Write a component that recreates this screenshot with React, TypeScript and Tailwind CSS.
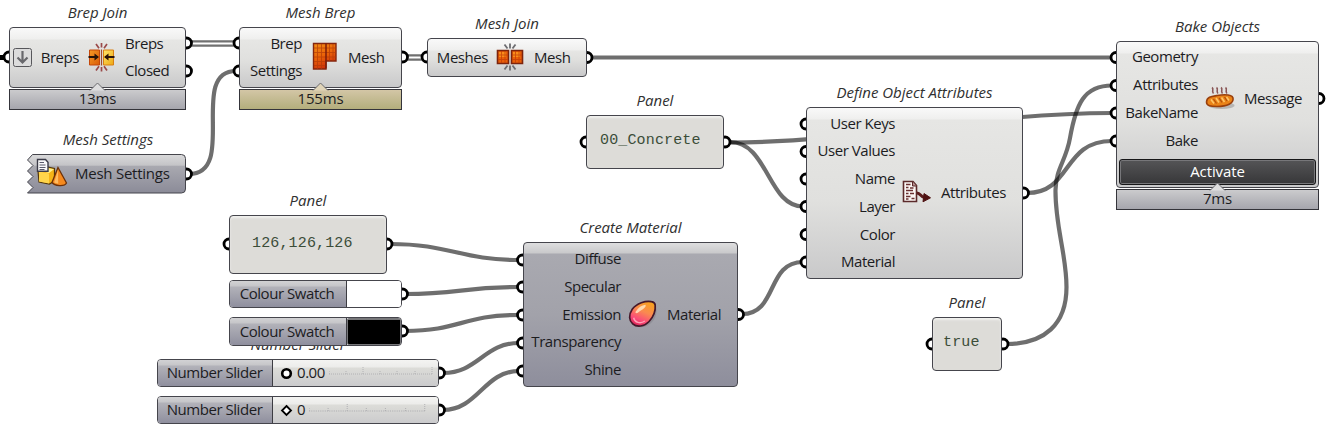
import type { ReactNode } from "react";

type Placed = { x: number; y: number; w: number; h: number };

const LIGHT = "bg-[linear-gradient(to_bottom,#f9f9f9_0,#efefee_11px,#e6e6e4_12px,#e0e0de_55%,#c9c9ca_100%)]";
const DARK = "bg-[linear-gradient(to_bottom,#dededf_0,#c9c9cb_10px,#a9a9b0_11px,#a2a2aa_50%,#8e8e9c_100%)]";
const TAG = "bg-[linear-gradient(to_bottom,#d2d2d4_0,#c6c6c9_5px,#b2b2b9_6px,#8f8f9e_100%)]";
const TRACK = "bg-[linear-gradient(to_bottom,#f4f4f2_0,#ececea_7px,#dcdcd8_8px,#cbcbcd_100%)]";

function Title({ children }: { children: ReactNode }) {
  return (
    <h2 className="mb-[5px] flex h-5 items-center justify-center text-[15px] tracking-[-0.02px] text-[#303030] italic">
      {children}
    </h2>
  );
}

function Timer({ text, warm }: { text: string; warm: boolean }) {
  return (
    <div
      className={`relative mt-px flex h-[21px] items-center justify-center border border-[#34343a] bg-linear-to-b pb-[3px] ${
        warm ? "from-[#d3c6a6] to-[#b3ae7c]" : "from-[#cbcbcd] to-[#a6a6ad]"
      }`}
    >
      <svg className="absolute -top-[8px] left-1/2 -ml-[9px]" width="18" height="9" viewBox="0 0 18 9">
        <path d="M1 8.500L8.500 1L16 8.500" fill={warm ? "#e0d4b8" : "#dededf"} stroke="#6a6a6e" strokeWidth="1" />
      </svg>
      <span className="relative tracking-[-0.2px]">{text}</span>
    </div>
  );
}

function Node({
  x,
  y,
  w,
  h,
  title,
  timer,
  warm = false,
  className = "",
  children,
}: Placed & { title?: string; timer?: string; warm?: boolean; className?: string; children: ReactNode }) {
  return (
    <section className="absolute flex flex-col" style={{ left: x, top: title ? y - 25 : y, width: w }}>
      {title && <Title>{title}</Title>}
      <div className={`overflow-hidden rounded-[4px] border border-[#45454c] ${className}`} style={{ height: h }}>
        {children}
      </div>
      {timer && <Timer text={timer} warm={warm} />}
    </section>
  );
}

function Names({ names, align, w }: { names: string[]; align: string; w?: number }) {
  return (
    <div className={`flex shrink-0 flex-col justify-center pb-[2px] ${align}`} style={{ width: w }}>
      {names.map((n) => (
        <span key={n} className="flex h-[27.7px] items-center">
          {n}
        </span>
      ))}
    </div>
  );
}

function Body({ inputs, w, icon, outputs }: { inputs: string[]; w: number; icon: ReactNode; outputs: string[] }) {
  return (
    <div className="flex h-full items-stretch">
      <Names names={inputs} w={w} align="items-end" />
      <div className="mr-[9px] ml-[7px] flex w-[30px] shrink-0 items-center justify-center pb-[2px]">{icon}</div>
      <Names names={outputs} align="items-start" />
    </div>
  );
}

function Panel({ pad, children, ...rect }: Placed & { children: ReactNode; pad: string }) {
  return (
    <Node {...rect} title="Panel" className="bg-[#dddcd8] shadow-[inset_0_2px_2px_#f0f0ee]">
      <div
        className={`flex h-full items-center font-['Liberation_Mono','Courier_New',monospace] text-[15px] tracking-[0.15px] whitespace-pre text-[#3b4d38] ${pad}`}
      >
        {children}
      </div>
    </Node>
  );
}

function JoinIcon() {
  return (
    <svg width="28" height="32" viewBox="0 0 28 32">
      <defs>
        <linearGradient id="jo" x1="0" y1="0" x2="1" y2="1">
          <stop offset="0" stopColor="#f79a25" />
          <stop offset="1" stopColor="#d95c08" />
        </linearGradient>
        <linearGradient id="jy" x1="0" y1="0" x2="1" y2="1">
          <stop offset="0" stopColor="#ffe66a" />
          <stop offset="1" stopColor="#eda713" />
        </linearGradient>
      </defs>
      <path d="M2.500 9h10v15h-10z" fill="url(#jo)" stroke="#c5480a" strokeWidth="1" />
      <path d="M16.500 9h10v15h-10z" fill="url(#jy)" stroke="#d87f12" strokeWidth="1" />
      <path d="M14.500 8.500v16" stroke="#a04a30" strokeWidth="1.200" />
      <path d="M1.500 16h7M27.500 16h-7" stroke="#2a1408" strokeWidth="1.800" />
      <path d="M7.500 12.500l4.500 3.500-4.500 3.500zM21.500 12.500L17 16l4.500 3.500z" fill="#2a1408" />
      <path d="M14.500 2v4.500M9 3l3 4.200M20 3l-3 4.200M14.500 26v4.500M9 29.500l3-4.200M20 29.500l-3-4.200" stroke="#9a4a4a" strokeWidth="1.700" fill="none" />
    </svg>
  );
}

function MeshIcon() {
  return (
    <svg width="26" height="30" viewBox="0 0 26 30">
      <defs>
        <linearGradient id="mb" x1="0" y1="0" x2="0.400" y2="1">
          <stop offset="0" stopColor="#f39016" />
          <stop offset="0.550" stopColor="#ea6208" />
          <stop offset="1" stopColor="#cf2f08" />
        </linearGradient>
      </defs>
      <path d="M2.500 1.500h22.500v17.500h-10v8h-12.500z" fill="url(#mb)" stroke="#84260e" strokeWidth="1.400" />
      <path d="M6.500 2v25M10.500 2v25M18.500 2v17M22 2v17M3 6h22M3 10.500h22M3 15h22M3 19.500h12M3 23.500h12" stroke="#b23a08" strokeWidth=".9" opacity=".75" />
      <path d="M15 1.500v25" stroke="#7c1c0a" strokeWidth="1.500" />
    </svg>
  );
}

function MeshJoinIcon() {
  return (
    <svg width="28" height="30" viewBox="0 0 28 30">
      <path d="M1.500 8.500h11v13h-11zM15.500 8.500h11v13h-11z" fill="#e95e08" stroke="#7c240c" strokeWidth="1.600" />
      <path d="M3 10h7v5H3zM17 10h7v5h-7z" fill="#fa8c1a" />
      <path d="M5.500 9v12M9 9v12M2 13h10M2 17.500h10M19.500 9v12M23 9v12M16 13h10M16 17.500h10" stroke="#c33c08" strokeWidth=".9" opacity=".8" />
      <path d="M14 1.500v5M8.500 2.500l3 4M19.500 2.500l-3 4M14 23.500v5M8.500 27.500l3-4M19.500 27.500l-3-4" stroke="#6c6c70" strokeWidth="1.800" />
    </svg>
  );
}

function GemIcon() {
  return (
    <svg width="32" height="32" viewBox="0 0 32 32">
      <defs>
        <linearGradient id="gm" x1="0.750" y1="0" x2="0.300" y2="1">
          <stop offset="0" stopColor="#f7a21c" />
          <stop offset="0.420" stopColor="#fa8a50" />
          <stop offset="0.750" stopColor="#fb4d78" />
          <stop offset="1" stopColor="#d82356" />
        </linearGradient>
      </defs>
      <path d="M6 27c5 5 15 4 21-4 4-6 4-12 2.500-18z" fill="#77777f" opacity=".4" />
      <path d="M25 2.800C19 1.500 9 4.500 4.500 11c-4 6-3.500 12 .5 15.500 4.500 4 12.500 3 17.500-2.500C28 18 29.500 12 29 6.500 28.900 4.200 27.500 3.200 25 2.800z" fill="url(#gm)" stroke="#45182a" strokeWidth="1.800" />
      <path d="M8.500 13c2.500-4 6-6.500 10-7 1.500 2-1.500 4-4.500 6-2.500 1.800-4 3.500-5.500 3-.8-.3-.6-1.200 0-2z" fill="#ffe5c2" opacity=".85" />
      <path d="M6 20c1 5 7 7 12 3.500" fill="none" stroke="#ff9fb5" strokeWidth="1.500" />
    </svg>
  );
}

function AttributesIcon() {
  return (
    <svg width="30" height="26" viewBox="0 0 30 26">
      <path d="M1.500 2.500h9.500l3.500 4v16H1.500z" fill="#fbf6f4" stroke="#5b2a2a" strokeWidth="1.600" />
      <path d="M10.500 2.500v4.500h4" fill="#b89090" stroke="#5b2a2a" strokeWidth="1" />
      <path d="M4 5.500h4.500M4 8.500h2.500M8 9h3.500M4 11.500h7M4 14.500h2.500M8 14.500h4M4 17.500h4.500M4 20h2.500M9.500 19.500h3" stroke="#6b3030" strokeWidth="1.500" />
      <path d="M15 14c3.500 0 3.500 4 7.500 4.500" fill="none" stroke="#5b1c1c" strokeWidth="3" />
      <path d="M22 14.500l6.500 4.300-7.500 4z" fill="#4f1212" stroke="#4f1212" strokeLinejoin="round" />
    </svg>
  );
}

function BreadIcon() {
  return (
    <svg className="shrink-0" width="32" height="26" viewBox="0 0 32 26">
      <path d="M8 2.500c2.500 1.800-1 3.500 1.500 6M12.500 2.500c2.500 1.800-1 3.500 1.500 6M17 2.500c2.500 1.800-1 3.500 1.500 6M21.500 2.500c2.500 1.800-1 3.500 1.500 6" fill="none" stroke="#8a5757" strokeWidth="1.600" />
      <ellipse cx="17.500" cy="20.500" rx="13" ry="3.500" fill="#8b8b8b" opacity=".5" />
      <path d="M2.500 17C3 12 7 11.500 13 10.500c7-1 15-1 16 2.500C30 18.500 23 21.500 13 21.500c-6 0-10.500-.3-10.500-4.500z" fill="#ea8318" stroke="#9a400c" strokeWidth="1.600" />
      <path d="M7 14.500l3 4M12 13l3 4.500M17.500 12.500l3 4.500M22.500 12l2.500 3.500" stroke="#ffc566" strokeWidth="1.600" />
      <path d="M9.500 14l3 4.500M15 12.800l3 4.500M20.500 12l2.500 4" stroke="#b4500c" strokeWidth="1.200" />
    </svg>
  );
}

function SettingsIcon() {
  return (
    <svg width="32" height="30" viewBox="0 0 32 30">
      <path d="M2 13l7-4.500 9.500 2V23l-5 3L3 24z" fill="#f6b417" stroke="#54380c" strokeWidth="1.200" />
      <path d="M3 13.500l10 2v10L3 23.500z" fill="#ffd54b" />
      <path d="M3 12.500l6-3 9 1.800-5 3.700z" fill="#fff08d" />
      <path d="M22 9.500L30.500 25c-2 4-12 3-14.500-.5z" fill="#f58a1f" stroke="#6d3108" strokeWidth="1.300" />
      <path d="M22 12l-3.800 12.500 4 1.300z" fill="#ffbc62" />
      <path d="M1.500 1.500h8l2.500 2.800v9H1.500z" fill="#fafafa" stroke="#3b3b48" strokeWidth="1.400" />
      <path d="M3.500 4.500h4.500M3.500 7h6M3.500 9.500h6M3.500 11.500h5" stroke="#5b5b6b" strokeWidth="1.200" />
    </svg>
  );
}

const wires = [
  "M592 57.500H1112",
  "M189 174C238 174 188 71 236 71",
  "M390 244C450 244 460 260 519 260",
  "M405 294C460 294 462 287 519 287",
  "M405 331C460 331 462 315 519 315",
  "M443 373C478 373 484 343 519 343",
  "M443 410C478 410 484 371 519 371",
  "M742 314C778 314 766 262 803 262",
  "M730 142C768 142 768 206.500 803 206.500",
  "M730 142.500C860 142.500 980 113 1112 113",
  "M1027 193C1072 193 1062 141 1112 141",
  "M1006 344C1045 344 1066.500 324 1066.500 287C1066.500 254 1055 226 1055.500 190C1056 168 1066 161 1070 138C1076 104 1084 85.500 1112 85.500",
];

const grips: [number, number][] = [
  [9, 57], [186.5, 43], [186.5, 71], [239, 43], [239, 71], [402.5, 57], [427, 57], [587, 57.5],
  [186.5, 174], [229, 244], [387, 244], [402.5, 294], [402.5, 331], [439.5, 373], [439.5, 410],
  [522.5, 260], [522.5, 287], [522.5, 315], [522.5, 343], [522.5, 371], [738.5, 314.5],
  [586, 142], [725, 142], [806, 124], [806, 151.5], [806, 179], [806, 206.5], [806, 234.5], [806, 262],
  [1023.5, 193], [1116, 57.5], [1116, 85.5], [1116, 113], [1116, 141], [1319, 98.5], [932, 344], [1003, 344],
];

function Wires() {
  return (
    <svg className="absolute inset-0" width="1327" height="430" viewBox="0 0 1327 430">
      {wires.map((d) => (
        <path key={d} d={d} fill="none" stroke="#000" strokeOpacity=".57" strokeWidth="4.200" />
      ))}
      <path d="M190 41.300H234M190 45.700H234M406 55.300H422M406 59.700H422" stroke="#707070" strokeWidth="2.300" />
      <path d="M0 57.500H5" stroke="#000" strokeWidth="5" />
      {grips.map(([x, y]) => (
        <circle key={`${x}-${y}`} cx={x} cy={y} r="5" fill="#fff" stroke="#000" strokeWidth="2.800" />
      ))}
    </svg>
  );
}

function Swatch({ y, h, black = false }: { y: number; h: number; black?: boolean }) {
  return (
    <Node x={229} y={y} w={173} h={h}>
      <div className="flex h-full">
        <div className={`flex w-[117px] shrink-0 items-center justify-center border-r border-[#3c3c42] pr-[2px] pb-[2px] ${TAG}`}>
          Colour Swatch
        </div>
        <div className={`flex-1 ${black ? "rounded-[2px] border border-t-2 border-[#77777a] bg-black" : "bg-white"}`} />
      </div>
    </Node>
  );
}

function Slider({ y, title, value, round }: { y: number; title?: string; value: string; round: boolean }) {
  return (
    <Node x={157} y={y} w={282} h={28} title={title}>
      <div className="flex h-full">
        <div className={`flex w-[115px] shrink-0 items-center justify-center border-r border-[#3c3c42] pr-px pb-[2px] ${TAG}`}>
          Number Slider
        </div>
        <div className={`flex flex-1 items-center pl-[7px] ${TRACK}`}>
          <svg width="13" height="13" viewBox="0 0 13 13">
            {round ? (
              <circle cx="6.500" cy="6.500" r="4.300" fill="#fff" stroke="#000" strokeWidth="2.600" />
            ) : (
              <path d="M6.500 2L11 6.500 6.500 11 2 6.500z" fill="#fff" stroke="#000" strokeWidth="1.800" />
            )}
          </svg>
          <span className="ml-[4px] pb-[2px]">{value}</span>
          <svg className="mr-3 ml-1 h-3 min-w-0 flex-1" viewBox="0 0 104 12" preserveAspectRatio="none">
            <path d="M0 7H104M0 7V4M17 7V4M34 7V0M51 7V4M68 7V4M86 7V4M103 7V0" stroke="#a8a8ac" strokeWidth=".8" strokeDasharray="1 1" fill="none" />
          </svg>
        </div>
      </div>
    </Node>
  );
}

function MeshSettings() {
  return (
    <section className="absolute top-[129px] left-[28px] flex w-[160px] flex-col">
      <Title>Mesh Settings</Title>
      <div className="relative -ml-px flex h-[40px] items-center">
        <svg className="absolute inset-0" width="160" height="40" viewBox="0 0 160 40">
          <defs>
            <linearGradient id="ms" x1="0" y1="0" x2="0" y2="1">
              <stop offset="0" stopColor="#dadadb" />
              <stop offset="0.280" stopColor="#c4c4c7" />
              <stop offset="0.300" stopColor="#a9a9b0" />
              <stop offset="1" stopColor="#8b8b98" />
            </linearGradient>
          </defs>
          <path d="M5.500.5H154.500Q158.500.5 158.500 4.500V35Q158.500 39 154.500 39H.500L6 33.500.500 28 6 22.500.500 17 6 11.500.500 6z" fill="url(#ms)" stroke="#45454c" />
        </svg>
        <div className="relative mb-[2px] ml-[9px] h-[30px] w-[32px]">
          <SettingsIcon />
        </div>
        <span className="relative ml-[7px] pb-[2px] tracking-[-0.25px]">Mesh Settings</span>
      </div>
    </section>
  );
}

export default function App() {
  return (
    <main className="relative h-[430px] w-[1327px] overflow-hidden bg-white font-['Open_Sans','Noto_Sans',sans-serif] text-[15px] leading-5 tracking-[-0.45px] whitespace-nowrap text-[#1c1c1f]">
      <Wires />

      <Node x={9} y={27} w={177} h={61} title="Brep Join" timer="13ms" className={LIGHT}>
        <div className="flex h-full items-stretch">
          <div className="flex w-[28px] shrink-0 items-center pb-px pl-[3px]">
            <svg width="19" height="19" viewBox="0 0 19 19">
              <rect x=".5" y=".5" width="18" height="18" rx="2" fill="#dcdcdc" stroke="#57575b" />
              <path d="M9.500 3v11M4.500 9.500l5 5 5-5" fill="none" stroke="#68686c" strokeWidth="2.200" />
            </svg>
          </div>
          <Body inputs={["Breps"]} w={41} icon={<JoinIcon />} outputs={["Breps", "Closed"]} />
        </div>
      </Node>

      <Node x={239} y={27} w={163} h={61} title="Mesh Brep" timer="155ms" warm className={LIGHT}>
        <Body inputs={["Brep", "Settings"]} w={62} icon={<MeshIcon />} outputs={["Mesh"]} />
      </Node>

      <Node x={427} y={38} w={160} h={39} title="Mesh Join" className={LIGHT}>
        <Body inputs={["Meshes"]} w={60} icon={<MeshJoinIcon />} outputs={["Mesh"]} />
      </Node>

      <MeshSettings />

      <Panel x={229} y={215} w={158} h={59} pad="pl-[22px] pb-[2px]">
        126,126,126
      </Panel>
      <Slider y={359} title="Number Slider" value="0.00" round />
      <Slider y={396} value="0" round={false} />
      <Swatch y={280} h={28} />
      <Swatch y={317} h={29} black />

      <Node x={523} y={242} w={215} h={145} title="Create Material" className={DARK}>
        <Body
          inputs={["Diffuse", "Specular", "Emission", "Transparency", "Shine"]}
          w={97}
          icon={<GemIcon />}
          outputs={["Material"]}
        />
      </Node>

      <Panel x={586} y={115} w={138} h={54} pad="pl-[13px] pb-[2px]">
        00_Concrete
      </Panel>

      <Node x={806} y={107} w={217} h={172} title="Define Object Attributes" className={LIGHT}>
        <Body
          inputs={["User Keys", "User Values", "Name", "Layer", "Color", "Material"]}
          w={88}
          icon={<AttributesIcon />}
          outputs={["Attributes"]}
        />
      </Node>

      <Panel x={932} y={317} w={70} h={54} pad="pl-[10px] pb-[2px]">
        true
      </Panel>

      <Node x={1116} y={41} w={203} h={147} title="Bake Objects" timer="7ms" className={LIGHT}>
        <div className="flex h-full flex-col">
          <div className="h-[114px]">
            <Body inputs={["Geometry", "Attributes", "BakeName", "Bake"]} w={81} icon={<BreadIcon />} outputs={["Message"]} />
          </div>
          <div className="mx-[2px] mt-[3px] flex h-[26px] items-center justify-center rounded-[3px] border border-[#161618] bg-linear-to-b from-[#555557] to-[#373739] pb-[2px] tracking-[-0.1px] text-white shadow-[inset_0_0_0_1px_#77777a]">
            Activate
          </div>
        </div>
      </Node>
    </main>
  );
}
